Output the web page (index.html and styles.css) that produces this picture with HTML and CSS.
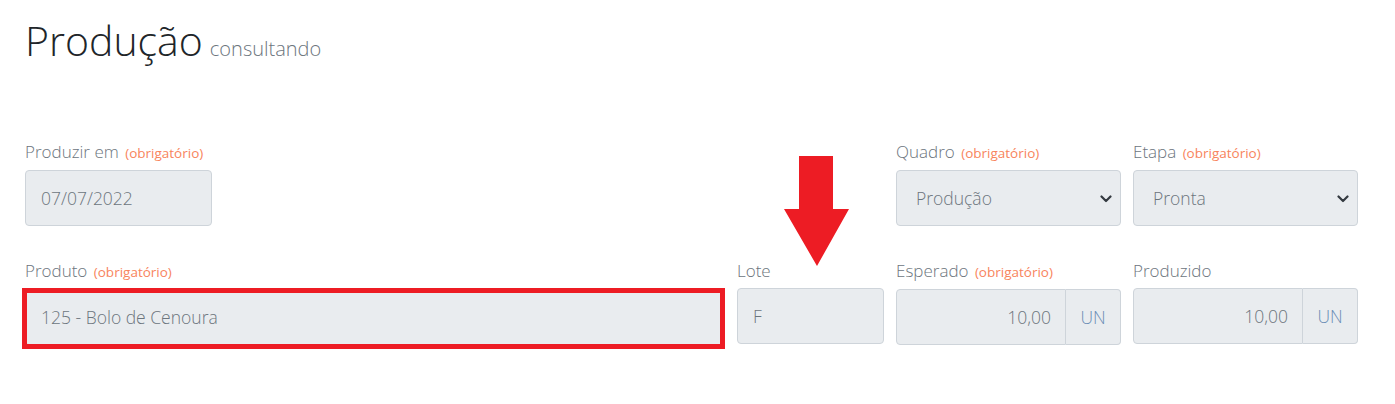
FILE: index.html
```html
<!DOCTYPE html>
<html lang="pt-BR">
<head>
<meta charset="utf-8">
<title>Produção</title>
<link rel="stylesheet" href="styles.css">
</head>
<body>
<div class="page">
  <h1 class="title">Produção<small class="subtitle">consultando</small></h1>

  <div class="row row-top">
    <div class="field">
      <label class="label">Produzir em <span class="req">(obrigatório)</span></label>
      <div class="control">07/07/2022</div>
    </div>
    <div class="spacer"></div>
    <div class="field">
      <label class="label">Quadro <span class="req">(obrigatório)</span></label>
      <div class="control select">Produção
        <svg class="chev" width="12" height="8" viewBox="0 0 12 8"><path d="M1.5 1.5 L6 6 L10.5 1.5" fill="none" stroke="#343a40" stroke-width="2.2" stroke-linecap="round" stroke-linejoin="round"/></svg>
      </div>
    </div>
    <div class="field">
      <label class="label">Etapa <span class="req">(obrigatório)</span></label>
      <div class="control select">Pronta
        <svg class="chev" width="12" height="8" viewBox="0 0 12 8"><path d="M1.5 1.5 L6 6 L10.5 1.5" fill="none" stroke="#343a40" stroke-width="2.2" stroke-linecap="round" stroke-linejoin="round"/></svg>
      </div>
    </div>
  </div>

  <div class="row row-bottom">
    <div class="field">
      <label class="label">Produto <span class="req">(obrigatório)</span></label>
      <div class="control-wrap">
        <div class="control">125 - Bolo de Cenoura</div>
        <div class="highlight"></div>
      </div>
    </div>
    <div class="field field-lote">
      <label class="label">Lote</label>
      <div class="control">F</div>
      <svg class="arrow" width="66" height="111" viewBox="0 0 66 111"><polygon points="15,0 49,0 49,53 65,53 33,110 0,53 15,53" fill="#ed1c24"/></svg>
    </div>
    <div class="field">
      <label class="label">Esperado <span class="req">(obrigatório)</span></label>
      <div class="group">
        <div class="control num">10,00</div>
        <div class="addon">UN</div>
      </div>
    </div>
    <div class="field">
      <label class="label">Produzido</label>
      <div class="group">
        <div class="control num">10,00</div>
        <div class="addon">UN</div>
      </div>
    </div>
  </div>
</div>
</body>
</html>
```

FILE: styles.css
```css
* { box-sizing: border-box; }
html, body { margin: 0; padding: 0; background: #fff; }
body {
  font-family: "Open Sans", "Liberation Sans", sans-serif;
  font-weight: 300;
  color: #212529;
}
.page {
  padding: 16px 37px 40px 25px;
}
.title {
  margin: 0;
  font-weight: 300;
  font-size: 41px;
  line-height: 48px;
  color: #212529;
}
.subtitle {
  margin-left: 7px;
  font-size: 20px;
  color: #6c757d;
  font-weight: 300;
}
.row {
  display: grid;
  column-gap: 12px;
}
.row-top {
  margin-top: 68px;
  grid-template-columns: 187px 1fr 225px 225px;
}
.row-bottom {
  margin-top: 34px;
  grid-template-columns: 700px 147px 225px 225px;
}
.field { display: flex; flex-direction: column; position: relative; }
.label {
  font-size: 17px;
  line-height: 22px;
  color: #6c757d;
  margin-bottom: 6px;
  white-space: nowrap;
}
.req {
  margin-left: 2px;
  font-size: 13.5px;
  font-weight: 400;
  color: #f8845c;
}
.control {
  height: 56px;
  background: #e9ecef;
  border: 1px solid #ced4da;
  border-radius: 4px;
  padding: 0 15px;
  display: flex;
  align-items: center;
  font-size: 17.5px;
  color: #6c757d;
  white-space: nowrap;
}
.select { position: relative; padding-left: 19px; }
.chev {
  position: absolute;
  right: 8px;
  top: 24px;
}
.control-wrap { position: relative; }
.highlight {
  position: absolute;
  left: -3px;
  top: -1px;
  width: 703px;
  height: 61px;
  border: 5px solid #ed1c24;
  pointer-events: none;
}
.group { display: flex; }
.group .control {
  flex: 1;
  justify-content: flex-end;
  border-radius: 4px 0 0 4px;
  padding-right: 14px;
}
.addon {
  width: 55px;
  height: 56px;
  background: #e9ecef;
  border: 1px solid #ced4da;
  border-left: 0;
  border-radius: 0 4px 4px 0;
  display: flex;
  align-items: center;
  justify-content: center;
  font-size: 17.5px;
  color: #6b8db5;
}
.arrow {
  position: absolute;
  left: 47px;
  top: -104px;
}
```
